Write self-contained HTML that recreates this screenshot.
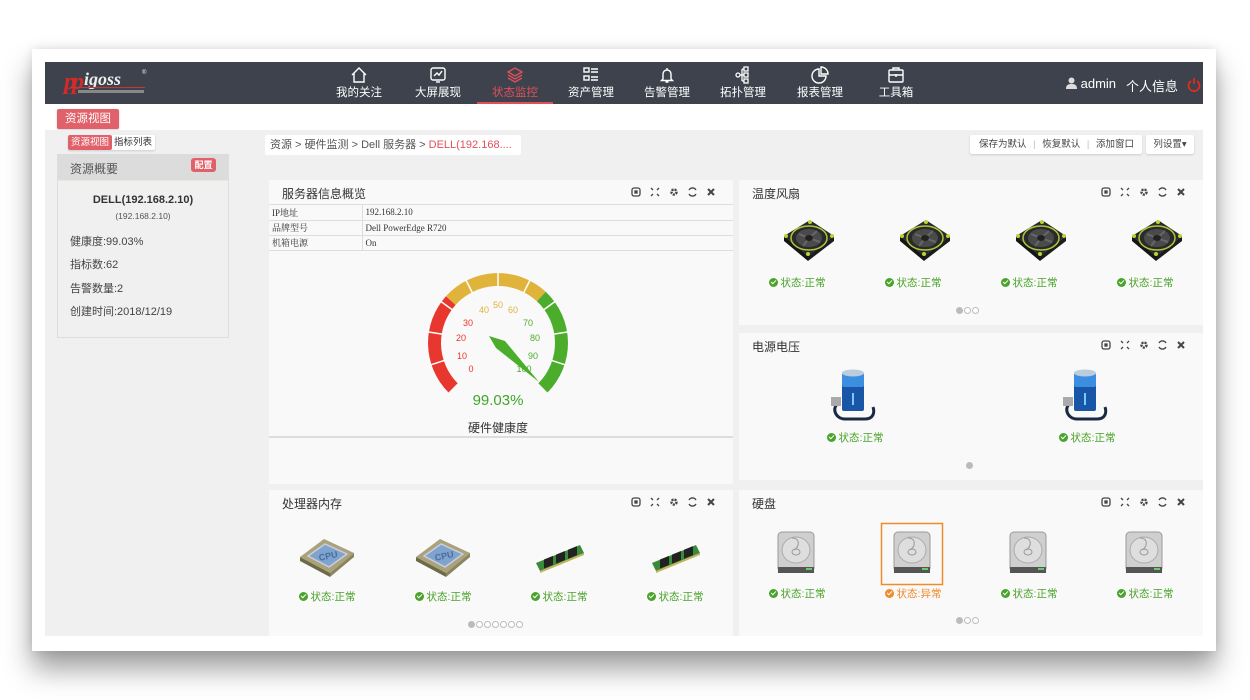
<!DOCTYPE html>
<html><head><meta charset="utf-8"><style>
*{margin:0;padding:0;box-sizing:border-box}
body{width:1250px;height:700px;background:#fff;position:relative;overflow:hidden;font-family:"Liberation Sans","Noto Sans CJK SC",sans-serif;color:#333}
.a{position:absolute}
#frame{left:32px;top:49px;width:1184px;height:602px;background:#fff;box-shadow:0 18px 26px rgba(0,0,0,.38),0 0 10px rgba(0,0,0,.12)}
#hdr{left:45px;top:62px;width:1158px;height:42px;background:#3d424d}
.nav{position:absolute;top:62px;width:70px;height:42px;text-align:center;color:#fff;font-size:11.5px}
.nav svg{position:absolute;left:26px;top:4px}
.nav span{position:absolute;left:0;right:0;top:22px}
#content{left:45px;top:130px;width:1158px;height:506px;background:#f0f0f0}
.panel{position:absolute;background:#f9f9f9}
.ph{position:absolute;left:13px;top:5px;font-size:12px;color:#333}
.tools{position:absolute;top:6px}
.st{position:absolute;width:100px;margin-left:-50px;text-align:center;font-size:10.5px;color:#4aa32a;white-space:nowrap}
.st i{display:inline-block;width:9px;height:9px;border-radius:50%;background:#4aa32a;vertical-align:-1px;margin-right:3px;position:relative}
.st i:after{content:"";position:absolute;left:2px;top:2px;width:4px;height:2px;border-left:1.5px solid #fff;border-bottom:1.5px solid #fff;transform:rotate(-45deg)}
.dots{position:absolute;height:7px}
.dots b{display:inline-block;width:7px;height:7px;border-radius:50%;border:1px solid #bbb;background:#fff;margin-right:1px;vertical-align:top}
.dots b.on{background:#bbb}
.ic{position:absolute}
td{border-bottom:1px solid #ddd;font-family:"Liberation Serif","Noto Serif CJK SC",serif;font-size:9px;height:15px;padding-left:3px;color:#333}
</style></head><body>
<div id="frame" class="a"></div>
<div id="hdr" class="a"></div>
<div class="a" style="left:62px;top:67px;width:90px;height:30px">
 <div class="a" style="left:2px;top:2px;font:italic bold 24px 'Liberation Serif',serif;color:#d42a2a;letter-spacing:-4px">pp</div>
 <div class="a" style="left:22px;top:2px;font:italic bold 18px 'Liberation Serif',serif;color:#eee">igoss</div>
 <div class="a" style="left:80px;top:3px;font-size:6px;color:#eee">®</div>
 <div class="a" style="left:16px;top:23px;width:66px;height:3px;background:#888"></div>
 <div class="a" style="left:8px;top:20px;width:75px;height:1px;background:#c33"></div>
</div>
<div class="nav" style="left:324px"><svg width="18" height="18" viewBox="0 0 18 18" fill="none" stroke="#fff" stroke-width="1.4"><path d="M2 9L9 2l7 7M4 7v9h10V7"/></svg><span>我的关注</span></div>
<div class="nav" style="left:403px"><svg width="18" height="18" viewBox="0 0 18 18" fill="none" stroke="#fff" stroke-width="1.4"><rect x="2" y="2" width="14" height="12" rx="2"/><path d="M5 10l3-3 2 2 3-4"/><path d="M7 16h4"/></svg><span>大屏展现</span></div>
<div class="nav" style="left:480px"><svg width="18" height="18" viewBox="0 0 18 18" fill="none" stroke="#e0505a" stroke-width="1.4"><path d="M9 2l7 4-7 4-7-4z M2 9l7 4 7-4 M2 12l7 4 7-4"/></svg><span style="color:#e0505a">状态监控</span><div class="a" style="left:-3px;right:-3px;bottom:0;height:2px;background:#e0505a"></div></div>
<div class="nav" style="left:556px"><svg width="18" height="18" viewBox="0 0 18 18" fill="none" stroke="#fff" stroke-width="1.4"><rect x="2" y="2" width="5" height="4"/><rect x="2" y="10" width="5" height="4"/><path d="M9 3h7M9 6h7M9 11h7M9 14h7"/></svg><span>资产管理</span></div>
<div class="nav" style="left:632px"><svg width="18" height="18" viewBox="0 0 18 18" fill="none" stroke="#fff" stroke-width="1.4"><path d="M5 13V8a4 4 0 018 0v5l1.5 1.5h-11zM9 2v2M7.5 16h3"/></svg><span>告警管理</span></div>
<div class="nav" style="left:708px"><svg width="18" height="18" viewBox="0 0 18 18" fill="none" stroke="#fff" stroke-width="1.3"><circle cx="4" cy="9" r="2"/><rect x="10" y="1" width="4" height="4"/><rect x="10" y="7" width="4" height="4"/><rect x="10" y="13" width="4" height="4"/><path d="M6 9h4M8 3h2M8 15h2M8 3v12"/></svg><span>拓扑管理</span></div>
<div class="nav" style="left:785px"><svg width="18" height="18" viewBox="0 0 18 18" fill="none" stroke="#fff" stroke-width="1.4"><path d="M8 3a7 7 0 107 7H8z"/><path d="M10 1a7 7 0 017 7h-7z"/></svg><span>报表管理</span></div>
<div class="nav" style="left:861px"><svg width="18" height="18" viewBox="0 0 18 18" fill="none" stroke="#fff" stroke-width="1.4"><rect x="2" y="4" width="14" height="12" rx="1"/><path d="M6 4V2h6v2M2 9h14M9 8v3"/></svg><span>工具箱</span></div>
<div class="a" style="left:1066px;top:76px;font-size:13px;color:#fff"><svg width="11" height="12" viewBox="0 0 11 12" style="vertical-align:-1px"><circle cx="5.5" cy="3.5" r="3" fill="#ddd"/><path d="M0 12c0-4 2-5 5.5-5S11 8 11 12z" fill="#ddd"/></svg> admin</div>
<div class="a" style="left:1126px;top:76px;font-size:13px;color:#fff">个人信息</div>
<svg class="a" style="left:1187px;top:77px" width="14" height="15" viewBox="0 0 14 15" fill="none" stroke="#e02b20" stroke-width="1.8"><path d="M4 4a5.5 5.5 0 106 0M7 1v6"/></svg>
<div class="a" style="left:57px;top:109px;width:62px;height:20px;background:#e0616a;border-radius:2px;color:#fff;font-size:11.5px;text-align:center;line-height:20px;box-shadow:0 1px 2px rgba(0,0,0,.2)">资源视图</div>
<div id="content" class="a"></div>
<div class="a" style="left:68px;top:135px;width:87px;height:15px;background:#fff;border-radius:2px;box-shadow:0 1px 2px rgba(0,0,0,.15)"></div>
<div class="a" style="left:68px;top:135px;width:44px;height:15px;background:#e0616a;border-radius:2px;color:#fff;font-size:9.5px;line-height:15px;text-align:center">资源视图</div>
<div class="a" style="left:114px;top:135px;font-size:9.5px;line-height:15px">指标列表</div>
<div class="a" style="left:57px;top:154px;width:172px;height:184px;border:1px solid #ddd;background:#f0f0f0"></div>
<div class="a" style="left:58px;top:154px;width:170px;height:27px;background:#dcdcdc;border-bottom:1px solid #e4ecd8"></div>
<div class="a" style="left:70px;top:160px;font-size:12px;color:#555">资源概要</div>
<div class="a" style="left:191px;top:158px;width:25px;height:14px;background:#e0616a;border-radius:3px;color:#fff;font-size:9px;text-align:center;line-height:14px;font-weight:bold">配置</div>
<div class="a" style="left:58px;top:194px;width:170px;text-align:center;font-size:11px;font-weight:bold;color:#333">DELL(192.168.2.10)</div>
<div class="a" style="left:58px;top:211px;width:170px;text-align:center;font-size:8.5px;color:#555">(192.168.2.10)</div>
<div class="a" style="left:70px;top:233px;font-size:11px;color:#444">健康度:99.03%</div>
<div class="a" style="left:70px;top:256px;font-size:11px;color:#444">指标数:62</div>
<div class="a" style="left:70px;top:280px;font-size:11px;color:#444">告警数量:2</div>
<div class="a" style="left:70px;top:303px;font-size:11px;color:#444">创建时间:2018/12/19</div>
<div class="a" style="left:265px;top:135px;width:256px;height:20px;background:#fff;border-radius:2px;font-size:11px;line-height:20px;padding-left:5px;color:#555">资源 &gt; 硬件监测 &gt; Dell 服务器 &gt; <span style="color:#e0505a">DELL(192.168....</span></div>
<div class="a" style="left:970px;top:135px;width:172px;height:19px;background:#fff;border-radius:2px;box-shadow:0 1px 2px rgba(0,0,0,.15);font-size:9.5px;line-height:19px;color:#444;padding-left:9px">保存为默认 <span style="color:#bbb;margin:0 4px">|</span> 恢复默认 <span style="color:#bbb;margin:0 4px">|</span> 添加窗口</div>
<div class="a" style="left:1146px;top:135px;width:48px;height:19px;background:#fff;border-radius:2px;box-shadow:0 1px 2px rgba(0,0,0,.15);font-size:9.5px;line-height:19px;color:#444;text-align:center">列设置▾</div>

<div class="panel" style="left:269px;top:180px;width:464px;height:304px">
 <div class="ph">服务器信息概览</div>
 <svg class="tools" style="left:362px" width="90" height="12" viewBox="0 0 90 12" fill="none" stroke="#444" stroke-width="1.3"><rect x="1" y="2" width="8" height="8" rx="2"/><rect x="4" y="5" width="2" height="2" fill="#444"/><path d="M20 2l2 2M28 2l-2 2M20 10l2-2M28 10l-2-2"/><circle cx="43" cy="6" r="2.5" stroke-width="2.5" stroke-dasharray="2 1"/><path d="M58 4a4 4 0 017 0M65 8a4 4 0 01-7 0"/><path d="M77 3l6 6M83 3l-6 6" stroke-width="2"/></svg>
</div>
<div class="a" style="left:269px;top:204px;width:464px;height:1px;background:#ddd"></div>
<table class="a" style="left:269px;top:205px;width:464px;border-collapse:collapse">
<tr><td style="width:93px;border-right:1px solid #ddd">IP地址</td><td>192.168.2.10</td></tr>
<tr><td style="border-right:1px solid #ddd">品牌型号</td><td>Dell PowerEdge R720</td></tr>
<tr><td style="border-right:1px solid #ddd">机箱电源</td><td>On</td></tr>
</table>
<div class="a" style="left:269px;top:436px;width:464px;height:2px;background:#ddd"></div>
<svg class="a" style="left:0;top:0" width="1250" height="700" pointer-events="none">
 <path d="M448.5,392.5 A70,70 0 0 1 446,296.2 L455.6,304.9 A57,57 0 0 0 457.7,383.3 Z" fill="#e8372e"/>
 <path d="M446,296.2 A70,70 0 0 1 545.7,291.8 L536.9,301.3 A57,57 0 0 0 455.6,304.9 Z" fill="#e0b43a"/>
 <path d="M545.7,291.8 A70,70 0 0 1 547.5,392.5 L538.3,383.3 A57,57 0 0 0 536.9,301.3 Z" fill="#4cac2c"/>
 <g stroke="#fff" stroke-width="1.5">
  <line x1="498" y1="343" x2="498" y2="272" transform="rotate(-108 498 343)"/>
  <line x1="498" y1="343" x2="498" y2="272" transform="rotate(-81 498 343)"/>
  <line x1="498" y1="343" x2="498" y2="272" transform="rotate(-54 498 343)"/>
  <line x1="498" y1="343" x2="498" y2="272" transform="rotate(-27 498 343)"/>
  <line x1="498" y1="343" x2="498" y2="272"/>
  <line x1="498" y1="343" x2="498" y2="272" transform="rotate(27 498 343)"/>
  <line x1="498" y1="343" x2="498" y2="272" transform="rotate(54 498 343)"/>
  <line x1="498" y1="343" x2="498" y2="272" transform="rotate(81 498 343)"/>
  <line x1="498" y1="343" x2="498" y2="272" transform="rotate(108 498 343)"/>
 </g>
 <circle cx="498" cy="343" r="56" fill="#f9f9f9"/>
 <g font-family="Liberation Sans" font-size="9" text-anchor="middle" dominant-baseline="central">
  <text x="471" y="369" fill="#e8372e">0</text><text x="462" y="356" fill="#e8372e">10</text><text x="461" y="338" fill="#e8372e">20</text><text x="468" y="323" fill="#e8372e">30</text>
  <text x="484" y="310" fill="#e0b43a">40</text><text x="498" y="305" fill="#e0b43a">50</text><text x="513" y="310" fill="#e0b43a">60</text>
  <text x="528" y="323" fill="#4cac2c">70</text><text x="535" y="338" fill="#4cac2c">80</text><text x="533" y="356" fill="#4cac2c">90</text><text x="524" y="369" fill="#4cac2c">100</text>
 </g>
 <polygon points="489,336 505,341 539,382 496,348" fill="#4cac2c"/>
 <text x="498" y="405" font-family="Liberation Sans" font-size="15" fill="#3fa62a" text-anchor="middle">99.03%</text>
 <text x="498" y="432" font-family="Liberation Sans,Noto Sans CJK SC" font-size="12" fill="#333" text-anchor="middle">硬件健康度</text>
</svg>

<div class="panel" style="left:739px;top:180px;width:464px;height:145px">
 <div class="ph">温度风扇</div>
 <svg class="tools" style="left:362px" width="90" height="12" viewBox="0 0 90 12" fill="none" stroke="#444" stroke-width="1.3"><rect x="1" y="2" width="8" height="8" rx="2"/><rect x="4" y="5" width="2" height="2" fill="#444"/><path d="M20 2l2 2M28 2l-2 2M20 10l2-2M28 10l-2-2"/><circle cx="43" cy="6" r="2.5" stroke-width="2.5" stroke-dasharray="2 1"/><path d="M58 4a4 4 0 017 0M65 8a4 4 0 01-7 0"/><path d="M77 3l6 6M83 3l-6 6" stroke-width="2"/></svg>
</div>
<div class="panel" style="left:739px;top:333px;width:464px;height:147px">
 <div class="ph">电源电压</div>
 <svg class="tools" style="left:362px" width="90" height="12" viewBox="0 0 90 12" fill="none" stroke="#444" stroke-width="1.3"><rect x="1" y="2" width="8" height="8" rx="2"/><rect x="4" y="5" width="2" height="2" fill="#444"/><path d="M20 2l2 2M28 2l-2 2M20 10l2-2M28 10l-2-2"/><circle cx="43" cy="6" r="2.5" stroke-width="2.5" stroke-dasharray="2 1"/><path d="M58 4a4 4 0 017 0M65 8a4 4 0 01-7 0"/><path d="M77 3l6 6M83 3l-6 6" stroke-width="2"/></svg>
</div>
<div class="panel" style="left:269px;top:490px;width:464px;height:146px">
 <div class="ph">处理器内存</div>
 <svg class="tools" style="left:362px" width="90" height="12" viewBox="0 0 90 12" fill="none" stroke="#444" stroke-width="1.3"><rect x="1" y="2" width="8" height="8" rx="2"/><rect x="4" y="5" width="2" height="2" fill="#444"/><path d="M20 2l2 2M28 2l-2 2M20 10l2-2M28 10l-2-2"/><circle cx="43" cy="6" r="2.5" stroke-width="2.5" stroke-dasharray="2 1"/><path d="M58 4a4 4 0 017 0M65 8a4 4 0 01-7 0"/><path d="M77 3l6 6M83 3l-6 6" stroke-width="2"/></svg>
</div>
<div class="panel" style="left:739px;top:490px;width:464px;height:146px">
 <div class="ph">硬盘</div>
 <svg class="tools" style="left:362px" width="90" height="12" viewBox="0 0 90 12" fill="none" stroke="#444" stroke-width="1.3"><rect x="1" y="2" width="8" height="8" rx="2"/><rect x="4" y="5" width="2" height="2" fill="#444"/><path d="M20 2l2 2M28 2l-2 2M20 10l2-2M28 10l-2-2"/><circle cx="43" cy="6" r="2.5" stroke-width="2.5" stroke-dasharray="2 1"/><path d="M58 4a4 4 0 017 0M65 8a4 4 0 01-7 0"/><path d="M77 3l6 6M83 3l-6 6" stroke-width="2"/></svg>
</div>

<svg class="a" style="left:0;top:0" width="1250" height="700">
 <defs>
  <g id="fan"><polygon points="-24,-4 2,-20 26,-4 0,16" fill="#2a2a2a"/><polygon points="-24,-4 0,16 0,21 -24,1" fill="#151515"/><polygon points="0,16 26,-4 26,1 0,21" fill="#1c1c1c"/><ellipse cx="1" cy="-2" rx="18" ry="12" fill="none" stroke="#a8c83a" stroke-width="1.5"/><ellipse cx="1" cy="-2" rx="13" ry="9" fill="#4a4a4a"/><path d="M1 -2l-10 -4M1 -2l8 -7M1 -2l11 4M1 -2l-6 8" stroke="#666" stroke-width="2"/><ellipse cx="1" cy="-2" rx="4" ry="3" fill="#222"/><circle cx="-22" cy="-4" r="2" fill="#b9d33a"/><circle cx="2" cy="-18" r="2" fill="#b9d33a"/><circle cx="24" cy="-4" r="2" fill="#b9d33a"/><circle cx="0" cy="14" r="2" fill="#b9d33a"/></g>
  <g id="bat"><path d="M-14 8c-8 4-4 16 6 16h20c8 0 10-6 8-12" fill="none" stroke="#1a2a45" stroke-width="3"/><rect x="-11" y="-22" width="22" height="38" rx="2" fill="#1a56a8"/><rect x="-11" y="-22" width="22" height="14" rx="2" fill="#3c8ee0"/><ellipse cx="0" cy="-22" rx="11" ry="3.5" fill="#bcd"/><rect x="-1" y="-2" width="2" height="12" fill="#7cf"/><rect x="-22" y="2" width="10" height="9" fill="#aaa"/></g>
  <g id="cpu"><polygon points="-28,2 -4,-16 26,-2 2,18" fill="#a9a27a"/><polygon points="-28,2 2,18 2,22 -28,6" fill="#6d6a48"/><polygon points="2,18 26,-2 26,2 2,22" fill="#8a8560"/><polygon points="-20,1 -3,-11 19,-1 1,12" fill="#7fa3cf" stroke="#ccd" stroke-width="1.5"/><text x="0" y="4" font-family="Liberation Sans" font-weight="bold" font-size="9" fill="#4a6e9a" text-anchor="middle" transform="rotate(-12)">CPU</text></g>
  <g id="ram"><polygon points="-24,6 20,-12 24,-4 -20,14" fill="#3b8a3b"/><polygon points="-20,14 24,-4 24,-2 -20,16" fill="#c9b35a"/><rect x="-16" y="-4" width="9" height="9" fill="#222" transform="skewY(-22)"/><rect x="-4" y="-4" width="9" height="9" fill="#222" transform="skewY(-22)"/><rect x="8" y="-4" width="9" height="9" fill="#222" transform="skewY(-22)"/></g>
  <g id="hdd"><rect x="-18" y="-20" width="36" height="40" rx="4" fill="#cfcfcf"/><rect x="-18" y="-20" width="36" height="40" rx="4" fill="none" stroke="#999"/><ellipse cx="0" cy="-2" rx="14" ry="13" fill="#dedede" stroke="#aaa"/><ellipse cx="0" cy="0" rx="4" ry="3" fill="none" stroke="#999"/><path d="M-4 -14c8 0 8 8 2 12" fill="none" stroke="#999"/><rect x="-18" y="15" width="36" height="6" fill="#555"/><rect x="10" y="16" width="6" height="2" fill="#6c6"/></g>
 </defs>
 <use href="#fan" x="808" y="240"/><use href="#fan" x="924" y="240"/><use href="#fan" x="1040" y="240"/><use href="#fan" x="1156" y="240"/>
 <use href="#bat" x="853" y="395"/><use href="#bat" x="1085" y="395"/>
 <use href="#cpu" x="328" y="555"/><use href="#cpu" x="444" y="555"/><use href="#ram" x="560" y="557"/><use href="#ram" x="676" y="557"/>
 <use href="#hdd" x="796" y="552"/><use href="#hdd" x="912" y="552"/><use href="#hdd" x="1028" y="552"/><use href="#hdd" x="1144" y="552"/>
 <rect x="881.5" y="523.5" width="61" height="61" fill="none" stroke="#f08a2a" stroke-width="1.5"/>
</svg>

<div class="st" style="left:797px;top:275px"><i></i>状态:正常</div>
<div class="st" style="left:913px;top:275px"><i></i>状态:正常</div>
<div class="st" style="left:1029px;top:275px"><i></i>状态:正常</div>
<div class="st" style="left:1145px;top:275px"><i></i>状态:正常</div>
<div class="dots" style="left:956px;top:307px"><b class="on"></b><b></b><b></b></div>
<div class="st" style="left:855px;top:430px"><i></i>状态:正常</div>
<div class="st" style="left:1087px;top:430px"><i></i>状态:正常</div>
<div class="dots" style="left:966px;top:462px"><b class="on"></b></div>
<div class="st" style="left:327px;top:589px"><i></i>状态:正常</div>
<div class="st" style="left:443px;top:589px"><i></i>状态:正常</div>
<div class="st" style="left:559px;top:589px"><i></i>状态:正常</div>
<div class="st" style="left:675px;top:589px"><i></i>状态:正常</div>
<div class="dots" style="left:468px;top:621px"><b class="on"></b><b></b><b></b><b></b><b></b><b></b><b></b></div>
<div class="st" style="left:797px;top:586px"><i></i>状态:正常</div>
<div class="st" style="left:913px;top:586px;color:#f08a2a"><i style="background:#f08a2a"></i>状态:异常</div>
<div class="st" style="left:1029px;top:586px"><i></i>状态:正常</div>
<div class="st" style="left:1145px;top:586px"><i></i>状态:正常</div>
<div class="dots" style="left:956px;top:617px"><b class="on"></b><b></b><b></b></div>
</body></html>
